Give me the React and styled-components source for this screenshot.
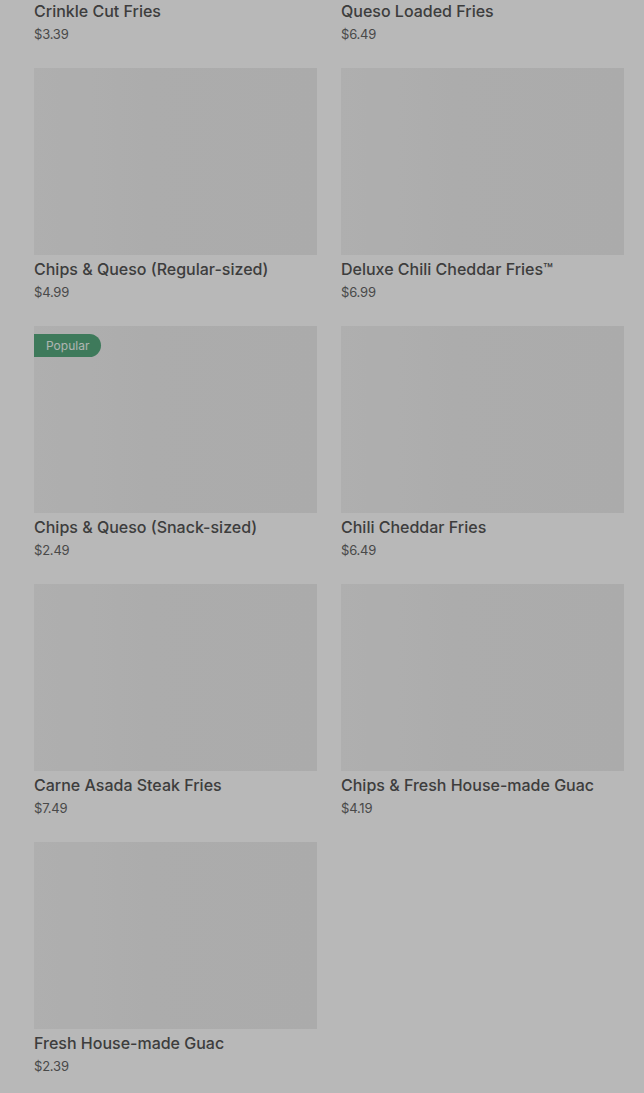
import React from "react";
import styled, { createGlobalStyle } from "styled-components";

const GlobalStyle = createGlobalStyle`
  html, body {
    margin: 0;
    padding: 0;
    background: #ffffff;
    overflow: hidden;
  }
  body {
    font-family: Inter, Roboto, "Liberation Sans", Arial, sans-serif;
  }
`;

const Page = styled.div`
  height: 1093px;
  overflow: hidden;
`;

const Grid = styled.div`
  display: grid;
  grid-template-columns: 283px 283px;
  grid-auto-rows: 234px;
  column-gap: 24px;
  row-gap: 24px;
  padding: 0 20px 0 34px;
  margin-top: -190px;
`;

const Card = styled.div`
  display: flex;
  flex-direction: column;
`;

const Thumb = styled.div`
  position: relative;
  flex: 0 0 187px;
  background: linear-gradient(90deg, #f3f3f3 0%, #efefef 40%, #eeeeee 100%);
`;

const Badge = styled.span`
  position: absolute;
  top: 8px;
  left: 0;
  height: 23px;
  line-height: 23px;
  padding: 0 12px;
  border-radius: 0 12px 12px 0;
  background: #56a97f;
  color: #f2fbf5;
  font-size: 12px;
`;

const Title = styled.div`
  margin-top: 4px;
  font-size: 16px;
  line-height: 20px;
  font-weight: 500;
  color: #555555;
`;

const Price = styled.div`
  margin-top: 4px;
  font-size: 13px;
  line-height: 18px;
  color: #666666;
  letter-spacing: -0.2px;
`;

const Overlay = styled.div`
  position: fixed;
  inset: 0;
  background: rgba(0, 0, 0, 0.28);
`;

const items = [
  { name: "Crinkle Cut Fries", price: "$3.39" },
  { name: "Queso Loaded Fries", price: "$6.49" },
  { name: "Chips & Queso (Regular-sized)", price: "$4.99" },
  { name: "Deluxe Chili Cheddar Fries™", price: "$6.99" },
  { name: "Chips & Queso (Snack-sized)", price: "$2.49", popular: true },
  { name: "Chili Cheddar Fries", price: "$6.49" },
  { name: "Carne Asada Steak Fries", price: "$7.49" },
  { name: "Chips & Fresh House-made Guac", price: "$4.19" },
  { name: "Fresh House-made Guac", price: "$2.39" },
];

const App = () => {
  return (
    <Page>
      <GlobalStyle />
      <Grid>
        {items.map((item) => (
          <Card key={item.name}>
            <Thumb>{item.popular && <Badge>Popular</Badge>}</Thumb>
            <Title>{item.name}</Title>
            <Price>{item.price}</Price>
          </Card>
        ))}
      </Grid>
      <Overlay />
    </Page>
  );
};

export default App;
